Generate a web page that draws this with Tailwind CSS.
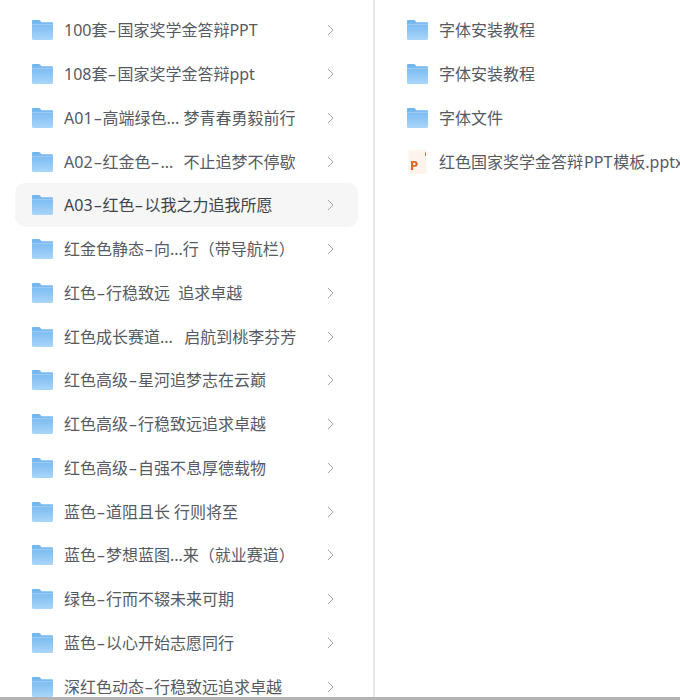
<!DOCTYPE html>
<html lang="zh">
<head>
    <meta charset="UTF-8">
    <title>文件列表</title>
    <script src="https://cdn.jsdelivr.net/npm/@tailwindcss/browser@4"></script>
</head>
<body class="bg-white w-[680px] h-[700px] overflow-hidden font-['Noto_Sans','Noto_Sans_CJK_SC',sans-serif]">
    <svg class="absolute w-0 h-0">
        <defs>
            <linearGradient id="folderFill" x1="0" y1="0" x2="0" y2="1">
                <stop offset="0" stop-color="#6fb4ee"/>
                <stop offset="1" stop-color="#a9d6fa"/>
            </linearGradient>
            <symbol id="folder" viewBox="0 0 21 20">
                <path d="M0 1.2C0 .5.5 0 1.2 0h5.6c.5 0 .9.2 1.2.6L9.5 2.2h10.3c.7 0 1.2.5 1.2 1.2v15.4c0 .7-.5 1.2-1.2 1.2H1.2C.5 20 0 19.5 0 18.8z" fill="url(#folderFill)"/>
                <path d="M0 4.6h21" stroke="#ffffff" stroke-opacity=".25" stroke-width="1"/>
            </symbol>
            <symbol id="chevron" viewBox="0 0 7 12">
                <path d="M1 1l5 5-5 5" fill="none" stroke="#a3a3a3" stroke-width="1"/>
            </symbol>
        </defs>
    </svg>

    <div class="flex h-[697px] overflow-hidden">
        <!-- left column -->
        <ul class="w-[373px] shrink-0 pt-[8.4px] pl-[15px] pr-[15px] text-base text-[#555a63]">
            <li class="flex items-center h-[43.75px] pl-[17px] pr-6"><svg class="w-[21px] h-5 shrink-0"><use href="#folder"/></svg><span class="ml-[11px] flex-1 whitespace-pre">100套<span class="inline-block px-[2.4px] scale-x-[1.7]">-</span>国家奖学金答辩PPT</span><svg class="w-[7px] h-3"><use href="#chevron"/></svg></li>
            <li class="flex items-center h-[43.75px] pl-[17px] pr-6"><svg class="w-[21px] h-5 shrink-0"><use href="#folder"/></svg><span class="ml-[11px] flex-1 whitespace-pre">108套<span class="inline-block px-[2.4px] scale-x-[1.7]">-</span>国家奖学金答辩ppt</span><svg class="w-[7px] h-3"><use href="#chevron"/></svg></li>
            <li class="flex items-center h-[43.75px] pl-[17px] pr-6"><svg class="w-[21px] h-5 shrink-0"><use href="#folder"/></svg><span class="ml-[11px] flex-1 whitespace-pre">A01<span class="inline-block px-[2.4px] scale-x-[1.7]">-</span>高端绿色... 梦青春勇毅前行</span><svg class="w-[7px] h-3"><use href="#chevron"/></svg></li>
            <li class="flex items-center h-[43.75px] pl-[17px] pr-6"><svg class="w-[21px] h-5 shrink-0"><use href="#folder"/></svg><span class="ml-[11px] flex-1 whitespace-pre">A02<span class="inline-block px-[2.4px] scale-x-[1.7]">-</span>红金色<span class="inline-block px-[2.4px] scale-x-[1.7]">-</span>...  <span class="ml-[2px]">不止追梦不停歇</span></span><svg class="w-[7px] h-3"><use href="#chevron"/></svg></li>
            <li class="flex items-center h-[43.75px] pl-[17px] pr-6 bg-[#f6f6f7] rounded-[10px] text-[#3f444c]"><svg class="w-[21px] h-5 shrink-0"><use href="#folder"/></svg><span class="ml-[11px] flex-1 whitespace-pre">A03<span class="inline-block px-[2.4px] scale-x-[1.7]">-</span>红色<span class="inline-block px-[2.4px] scale-x-[1.7]">-</span>以我之力追我所愿</span><svg class="w-[7px] h-3"><use href="#chevron"/></svg></li>
            <li class="flex items-center h-[43.75px] pl-[17px] pr-6"><svg class="w-[21px] h-5 shrink-0"><use href="#folder"/></svg><span class="ml-[11px] flex-1 whitespace-pre">红金色静态<span class="inline-block px-[2.4px] scale-x-[1.7]">-</span>向...行（带导航栏）</span><svg class="w-[7px] h-3"><use href="#chevron"/></svg></li>
            <li class="flex items-center h-[43.75px] pl-[17px] pr-6"><svg class="w-[21px] h-5 shrink-0"><use href="#folder"/></svg><span class="ml-[11px] flex-1 whitespace-pre">红色<span class="inline-block px-[2.4px] scale-x-[1.7]">-</span>行稳致远  追求卓越</span><svg class="w-[7px] h-3"><use href="#chevron"/></svg></li>
            <li class="flex items-center h-[43.75px] pl-[17px] pr-6"><svg class="w-[21px] h-5 shrink-0"><use href="#folder"/></svg><span class="ml-[11px] flex-1 whitespace-pre">红色成长赛道...  <span class="ml-[3px]">启航到桃李芬芳</span></span><svg class="w-[7px] h-3"><use href="#chevron"/></svg></li>
            <li class="flex items-center h-[43.75px] pl-[17px] pr-6"><svg class="w-[21px] h-5 shrink-0"><use href="#folder"/></svg><span class="ml-[11px] flex-1 whitespace-pre">红色高级<span class="inline-block px-[2.4px] scale-x-[1.7]">-</span>星河追梦志在云巅</span><svg class="w-[7px] h-3"><use href="#chevron"/></svg></li>
            <li class="flex items-center h-[43.75px] pl-[17px] pr-6"><svg class="w-[21px] h-5 shrink-0"><use href="#folder"/></svg><span class="ml-[11px] flex-1 whitespace-pre">红色高级<span class="inline-block px-[2.4px] scale-x-[1.7]">-</span>行稳致远追求卓越</span><svg class="w-[7px] h-3"><use href="#chevron"/></svg></li>
            <li class="flex items-center h-[43.75px] pl-[17px] pr-6"><svg class="w-[21px] h-5 shrink-0"><use href="#folder"/></svg><span class="ml-[11px] flex-1 whitespace-pre">红色高级<span class="inline-block px-[2.4px] scale-x-[1.7]">-</span>自强不息厚德载物</span><svg class="w-[7px] h-3"><use href="#chevron"/></svg></li>
            <li class="flex items-center h-[43.75px] pl-[17px] pr-6"><svg class="w-[21px] h-5 shrink-0"><use href="#folder"/></svg><span class="ml-[11px] flex-1 whitespace-pre">蓝色<span class="inline-block px-[2.4px] scale-x-[1.7]">-</span>道阻且长 行则将至</span><svg class="w-[7px] h-3"><use href="#chevron"/></svg></li>
            <li class="flex items-center h-[43.75px] pl-[17px] pr-6"><svg class="w-[21px] h-5 shrink-0"><use href="#folder"/></svg><span class="ml-[11px] flex-1 whitespace-pre">蓝色<span class="inline-block px-[2.4px] scale-x-[1.7]">-</span>梦想蓝图...来（就业赛道）</span><svg class="w-[7px] h-3"><use href="#chevron"/></svg></li>
            <li class="flex items-center h-[43.75px] pl-[17px] pr-6"><svg class="w-[21px] h-5 shrink-0"><use href="#folder"/></svg><span class="ml-[11px] flex-1 whitespace-pre">绿色<span class="inline-block px-[2.4px] scale-x-[1.7]">-</span>行而不辍未来可期</span><svg class="w-[7px] h-3"><use href="#chevron"/></svg></li>
            <li class="flex items-center h-[43.75px] pl-[17px] pr-6"><svg class="w-[21px] h-5 shrink-0"><use href="#folder"/></svg><span class="ml-[11px] flex-1 whitespace-pre">蓝色<span class="inline-block px-[2.4px] scale-x-[1.7]">-</span>以心开始志愿同行</span><svg class="w-[7px] h-3"><use href="#chevron"/></svg></li>
            <li class="flex items-center h-[43.75px] pl-[17px] pr-6"><svg class="w-[21px] h-5 shrink-0"><use href="#folder"/></svg><span class="ml-[11px] flex-1 whitespace-pre">深红色动态<span class="inline-block px-[2.4px] scale-x-[1.7]">-</span>行稳致远追求卓越</span><svg class="w-[7px] h-3"><use href="#chevron"/></svg></li>
        </ul>

        <div class="w-[2px] shrink-0 bg-[#e8e8e8]"></div>

        <!-- right column -->
        <ul class="flex-1 min-w-0 overflow-hidden pt-[8.4px] pl-[32px] text-base text-[#555a63]">
            <li class="flex items-center h-[43.75px]"><svg class="w-[21px] h-5 shrink-0"><use href="#folder"/></svg><span class="ml-[11px] whitespace-nowrap">字体安装教程</span></li>
            <li class="flex items-center h-[43.75px]"><svg class="w-[21px] h-5 shrink-0"><use href="#folder"/></svg><span class="ml-[11px] whitespace-nowrap">字体安装教程</span></li>
            <li class="flex items-center h-[43.75px]"><svg class="w-[21px] h-5 shrink-0"><use href="#folder"/></svg><span class="ml-[11px] whitespace-nowrap">字体文件</span></li>
            <li class="flex items-center h-[43.75px]">
                <svg class="w-[21px] h-6 shrink-0" viewBox="0 0 21 24">
                    <path d="M1.5 0h18v24h-18z" fill="#fdf3ed"/>
                    <path d="M18.5 2.5v3.5" stroke="#e8622c" stroke-width="1"/>
                    <path fill-rule="evenodd" d="M4 20v-9h3.6c2 0 3.2 1.1 3.2 2.9s-1.200 2.900-3.200 2.900H6.200V20zM6.200 12.800v2.300h1.100c.8 0 1.200-.4 1.200-1.150s-.4-1.150-1.200-1.150z" fill="#e0692d"/>
                </svg>
                <span class="ml-[11px] whitespace-nowrap">红色国家奖学金答辩<span class="mx-px">PPT</span>模板.pptx</span>
            </li>
        </ul>
    </div>
    <div class="h-[3px] bg-[#b4b4b4]"></div>
</body>
</html>
